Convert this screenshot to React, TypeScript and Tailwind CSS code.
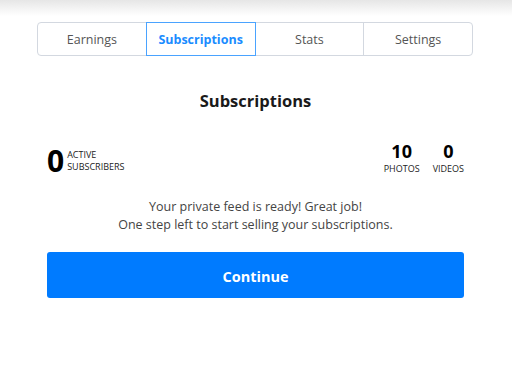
import React from "react";

export default function App() {
  const tabs = ["Earnings", "Subscriptions", "Stats", "Settings"];
  return (
    <div
      className="relative w-[512px] h-[371px] bg-white overflow-hidden"
      style={{ fontFamily: '"Open Sans", "Noto Sans", sans-serif' }}
    >
      <div className="absolute top-0 left-0 right-0 h-[16px] bg-gradient-to-b from-[#e6e6e6] to-white" />
      <div className="relative pt-[22px] pl-[37px] w-[473px]">
        <div className="flex h-[34px] rounded-[4px] border border-[#d3d8e0]">
          {tabs.map((t, i) => {
            const active = t === "Subscriptions";
            return (
              <div
                key={t}
                className={
                  "flex-1 flex items-center justify-center pt-[3px] text-[12.5px] " +
                  (active
                    ? "border border-[#4aa3ff] -my-px text-[#1a8cff] font-bold"
                    : "text-[#555] " + (i > 0 && i !== 2 ? "border-l border-[#d3d8e0]" : ""))
                }
              >
                {t}
              </div>
            );
          })}
        </div>
        <div className="pl-[10px] pr-[9px]">
          <div className="mt-[34px] text-center text-[16.5px] font-bold text-[#1a1a1a] leading-[22px]">
            Subscriptions
          </div>
          <div className="mt-[35px] flex items-start justify-between">
            <div className="flex items-center -mt-[1px]">
              <span className="text-[30px] font-bold leading-[30px] text-black">0</span>
              <div className="ml-[3px] text-[9px] leading-[12px] text-[#222] uppercase">
                <div>Active</div>
                <div>Subscribers</div>
              </div>
            </div>
            <div className="flex gap-[13px] -mt-[8px]">
              <div className="flex flex-col items-center">
                <span className="text-[18px] font-bold leading-[24px] text-black">10</span>
                <span className="text-[9px] leading-[12px] text-[#222]">PHOTOS</span>
              </div>
              <div className="flex flex-col items-center">
                <span className="text-[18px] font-bold leading-[24px] text-black">0</span>
                <span className="text-[9px] leading-[12px] text-[#222]">VIDEOS</span>
              </div>
            </div>
          </div>
          <div className="mt-[22px] text-center text-[12.5px] leading-[18px] text-[#444]">
            <div>Your private feed is ready! Great job!</div>
            <div>One step left to start selling your subscriptions.</div>
          </div>
          <button className="mt-[18px] w-full h-[46px] pt-[3px] rounded-[3px] bg-[#007bff] text-white font-bold text-[14.5px]">
            Continue
          </button>
        </div>
      </div>
    </div>
  );
}
